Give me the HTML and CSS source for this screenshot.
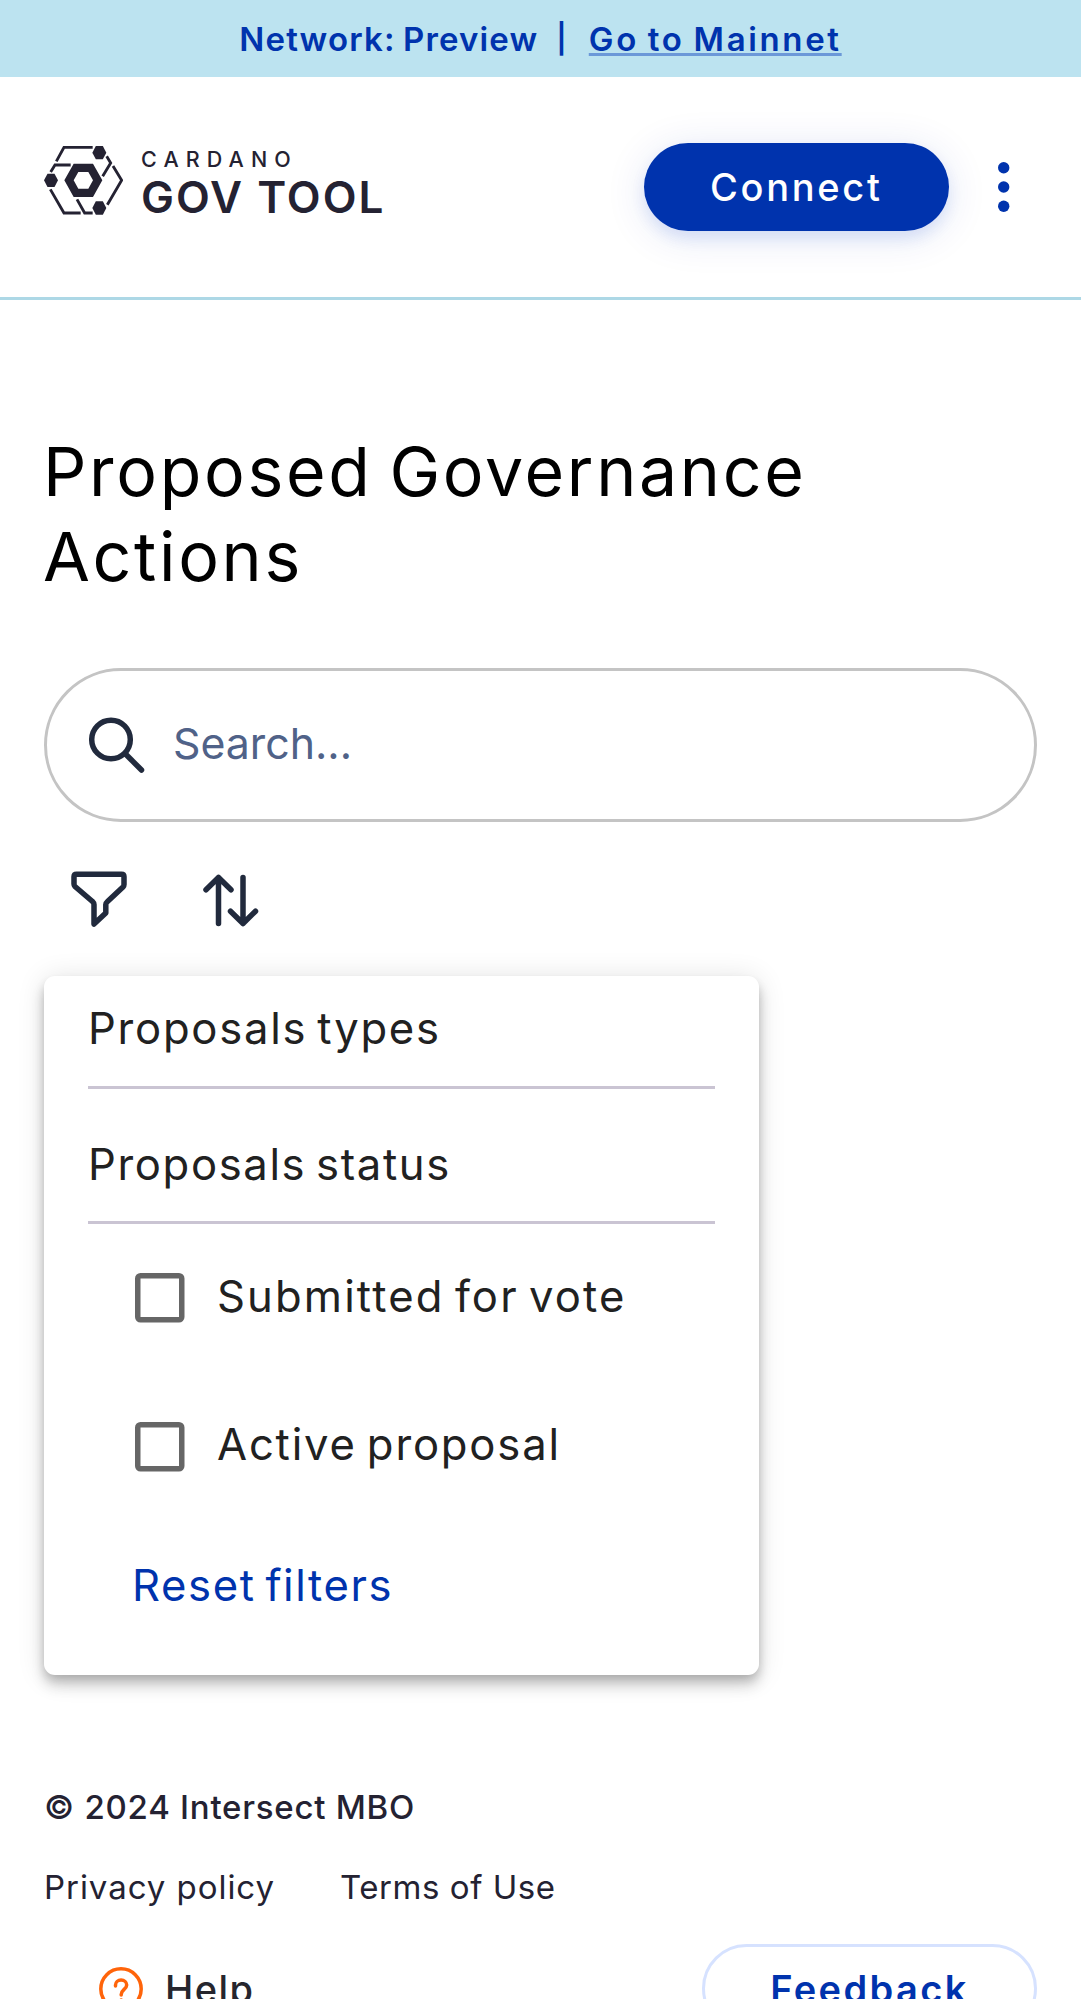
FILE: index.html
```html
<!DOCTYPE html>
<html lang="en">
<head>
<meta charset="utf-8">
<title>GovTool</title>
<link rel="stylesheet" href="styles.css">
</head>
<body>
<div class="banner">
  <span class="banner-network">Network: Preview</span>
  <span class="banner-sep">|</span>
  <a class="banner-link">Go to Mainnet</a>
</div>
<header class="header">
  <div class="logo">
    <svg class="logo-mark" viewBox="42 47 237 206">
      <g fill="none" stroke="#242232" stroke-width="8.500">
        <path d="M79 93 102 51H188"/>
        <path d="M62 125 75 104H122"/>
        <path d="M61 177 102 248H152"/>
        <path d="M141 207 164 248H188"/>
        <path d="M230 78 242 98 218 138"/>
        <path d="M249 107 275 150 232 223"/>
      </g>
      <g fill="#242232">
        <path d="M187 67 197.500 47H218.500L229 67 218.500 87H197.500Z"/>
        <path d="M42 150 52.500 130H73.500L84 150 73.500 170H52.500Z"/>
        <path d="M187 233 197.500 213H218.500L229 233 218.500 253H197.500Z"/>
        <path fill-rule="evenodd" d="M103 150 131 100H189L217 150 189 200H131ZM131 150 145 175H175L189 150 175 125H145Z"/>
      </g>
    </svg>
    <div class="logo-text">
      <span class="logo-top">CARDANO</span>
      <span class="logo-bottom">GOV TOOL</span>
    </div>
  </div>
  <div class="header-actions">
    <button class="connect">Connect</button>
    <svg class="menu-icon" viewBox="0 0 66 66" fill="#0033ad">
      <circle cx="32.700" cy="13.700" r="5.700"/><circle cx="32.700" cy="33" r="5.700"/><circle cx="32.700" cy="52.300" r="5.700"/>
    </svg>
  </div>
</header>
<main class="main">
  <h1 class="title">Proposed Governance<br>Actions</h1>
  <div class="search">
    <svg class="search-icon" viewBox="0 0 66 66" fill="none" stroke="#212a3d" stroke-width="5.500" stroke-linecap="round">
      <circle cx="27" cy="27.500" r="19.300"/><path d="M42 42.500 57.500 58"/>
    </svg>
    <span class="placeholder">Search...</span>
  </div>
  <div class="tools">
    <svg class="icon" viewBox="0 0 66 66" fill="none" stroke="#212a3d" stroke-width="5.500" stroke-linecap="round" stroke-linejoin="round">
      <path d="M10.500 8.200H55.500Q58 8.200 58 10.700V18.500Q58 20 57 21L41.500 35.500Q39.800 37 39.800 38.500V47L28 58V38.500Q28 37 26.500 35.500L9 20.500Q8 19.500 8 18V10.700Q8 8.200 10.500 8.200Z"/>
    </svg>
    <svg class="icon" viewBox="0 0 66 66" fill="none" stroke="#212a3d" stroke-width="5.500" stroke-linecap="round" stroke-linejoin="round">
      <path d="M20.500 57.500V11.500M8 23.800 20.500 11.500 33 23.800M45 11.500V57.500M32.500 45.200 45 57.500 57.500 45.200"/>
    </svg>
  </div>
  <section class="panel">
    <h2 class="group">Proposals types</h2>
    <h2 class="group group-status">Proposals status</h2>
    <div class="options">
      <label class="option">
        <svg class="box" viewBox="0 0 50 50"><rect x="2.750" y="2.750" width="44" height="44" rx="2.750"/></svg>
        <span class="label">Submitted for vote</span>
      </label>
      <label class="option">
        <svg class="box" viewBox="0 0 50 50"><rect x="2.750" y="2.750" width="44" height="44" rx="2.750"/></svg>
        <span class="label label-active">Active proposal</span>
      </label>
    </div>
    <a class="reset">Reset filters</a>
  </section>
</main>
<footer class="footer">
  <div class="copyright">© 2024 Intersect MBO</div>
  <nav class="links"><a class="privacy">Privacy policy</a><a class="terms">Terms of Use</a></nav>
  <div class="support">
    <a class="help">
      <svg class="help-icon" viewBox="0 0 44 44" fill="none" stroke="#ff640a" stroke-width="3.500" stroke-linecap="round">
        <circle cx="22" cy="22" r="20.200"/>
        <path d="M16.500 19V18A5.600 5 0 0 1 27.700 18C27.700 22.300 22.200 22.500 22.200 27.500V28"/>
        <path d="M22.200 33V33.200"/>
      </svg>
      <span>Help</span>
    </a>
    <button class="feedback">Feedback</button>
  </div>
</footer>
</body>
</html>
```
FILE: styles.css
```css
* { box-sizing: border-box; }
body { margin: 0; height: 1999px; overflow: hidden; background: #fff; font-family: Inter, "Liberation Sans", sans-serif; color: #242232; }
button { font-family: inherit; padding: 0; }

.banner { height: 77px; display: flex; justify-content: center; align-items: center; background: #bce3f0; color: #0033ad; font-size: 33px; font-weight: 600; line-height: 40px; word-spacing: -2px; }
.banner-network { letter-spacing: 1.150px; }
.banner-sep { margin: 0 22px 0 18px; font-size: 29px; }
.banner-link { letter-spacing: 2.650px; text-decoration: underline; text-decoration-color: #6b98d8; text-decoration-thickness: 3px; text-underline-offset: 2px; text-decoration-skip-ink: none; }

.header { height: 223px; padding: 0 44px; display: flex; justify-content: space-between; align-items: center; border-bottom: 3px solid #add8e6; }
.logo { display: flex; align-items: flex-start; height: 72px; margin-bottom: 10px; }
.logo-mark { width: 79px; height: 68.700px; }
.logo-text { display: flex; flex-direction: column; gap: 6px; padding: 1px 0 0 18px; }
.logo-top { font-size: 21.500px; font-weight: 500; line-height: 24px; letter-spacing: 7.100px; }
.logo-bottom { font-size: 44px; font-weight: 600; line-height: 40px; letter-spacing: 2px; }
.header-actions { display: flex; align-items: center; gap: 22px; }
.connect { width: 305.500px; height: 88px; border: 0; border-radius: 44px; background: #0033ad; color: #fff; font-size: 38px; font-weight: 500; letter-spacing: 2.700px; box-shadow: 0 5.500px 41px rgba(0, 51, 173, .12), 0 8px 14px rgba(47, 98, 220, .12); }
.menu-icon { width: 66px; height: 66px; }

.main { padding: 128.500px 44px 0; }
.title { margin: 0 0 69.500px -1px; color: #000; font-size: 68px; font-weight: 400; line-height: 85px; letter-spacing: 2.670px; word-spacing: -5px; }
.search { height: 154px; padding-left: 37px; display: flex; align-items: center; gap: 23px; border: 3px solid #c4c4c4; border-radius: 77px; }
.search-icon { width: 66px; height: 66px; }
.placeholder { margin-bottom: 4px; color: #506288; font-size: 42.800px; }
.tools { display: flex; gap: 66px; padding: 44px 22px; }
.icon { width: 66px; height: 66px; }

.panel { width: 715px; height: 698.500px; padding: 23px 44px 59px; border-radius: 11px; background: #fff; color: #212121; font-size: 43.600px; line-height: 60px; word-spacing: -4px; box-shadow: 0 5.500px 11px -2.750px rgba(0,0,0,.2), 0 11px 13.750px rgba(0,0,0,.14), 0 2.750px 27.500px rgba(0,0,0,.12); }
.group { margin: 0; padding-bottom: 26.500px; border-bottom: 3px solid #cac4d3; font-size: inherit; font-weight: 400; letter-spacing: 1.750px; }
.group-status { margin-top: 46px; letter-spacing: 1.630px; }
.options { display: flex; flex-direction: column; gap: 88.500px; padding: 44px 0 0 47px; }
.option { display: flex; align-items: center; height: 60px; gap: 32px; }
.box { width: 50px; height: 50px; fill: none; stroke: #666; stroke-width: 5.500px; }
.label { margin-bottom: 3px; letter-spacing: 2.130px; }
.label-active { letter-spacing: 1.820px; }
.reset { display: block; margin: 79px 0 0 44px; color: #0033ad; letter-spacing: 1.600px; }

.footer { padding: 112px 44px 0; font-size: 33px; line-height: 40px; }
.copyright { font-weight: 500; letter-spacing: .750px; }
.links { display: flex; gap: 65px; padding-top: 40px; }
.privacy { letter-spacing: .950px; }
.terms { letter-spacing: .550px; }
.support { display: flex; justify-content: space-between; align-items: center; padding: 37.600px 0 0 55px; }
.help { display: flex; align-items: center; gap: 22px; color: #26262e; font-size: 38px; font-weight: 500; letter-spacing: 1.400px; }
.help-icon { width: 44px; height: 44px; }
.feedback { width: 335px; height: 89px; flex: none; border: 3px solid #d6e2ff; border-radius: 44.500px; background: #fff; color: #0033ad; font-size: 38px; font-weight: 600; letter-spacing: 2.370px; }
```
